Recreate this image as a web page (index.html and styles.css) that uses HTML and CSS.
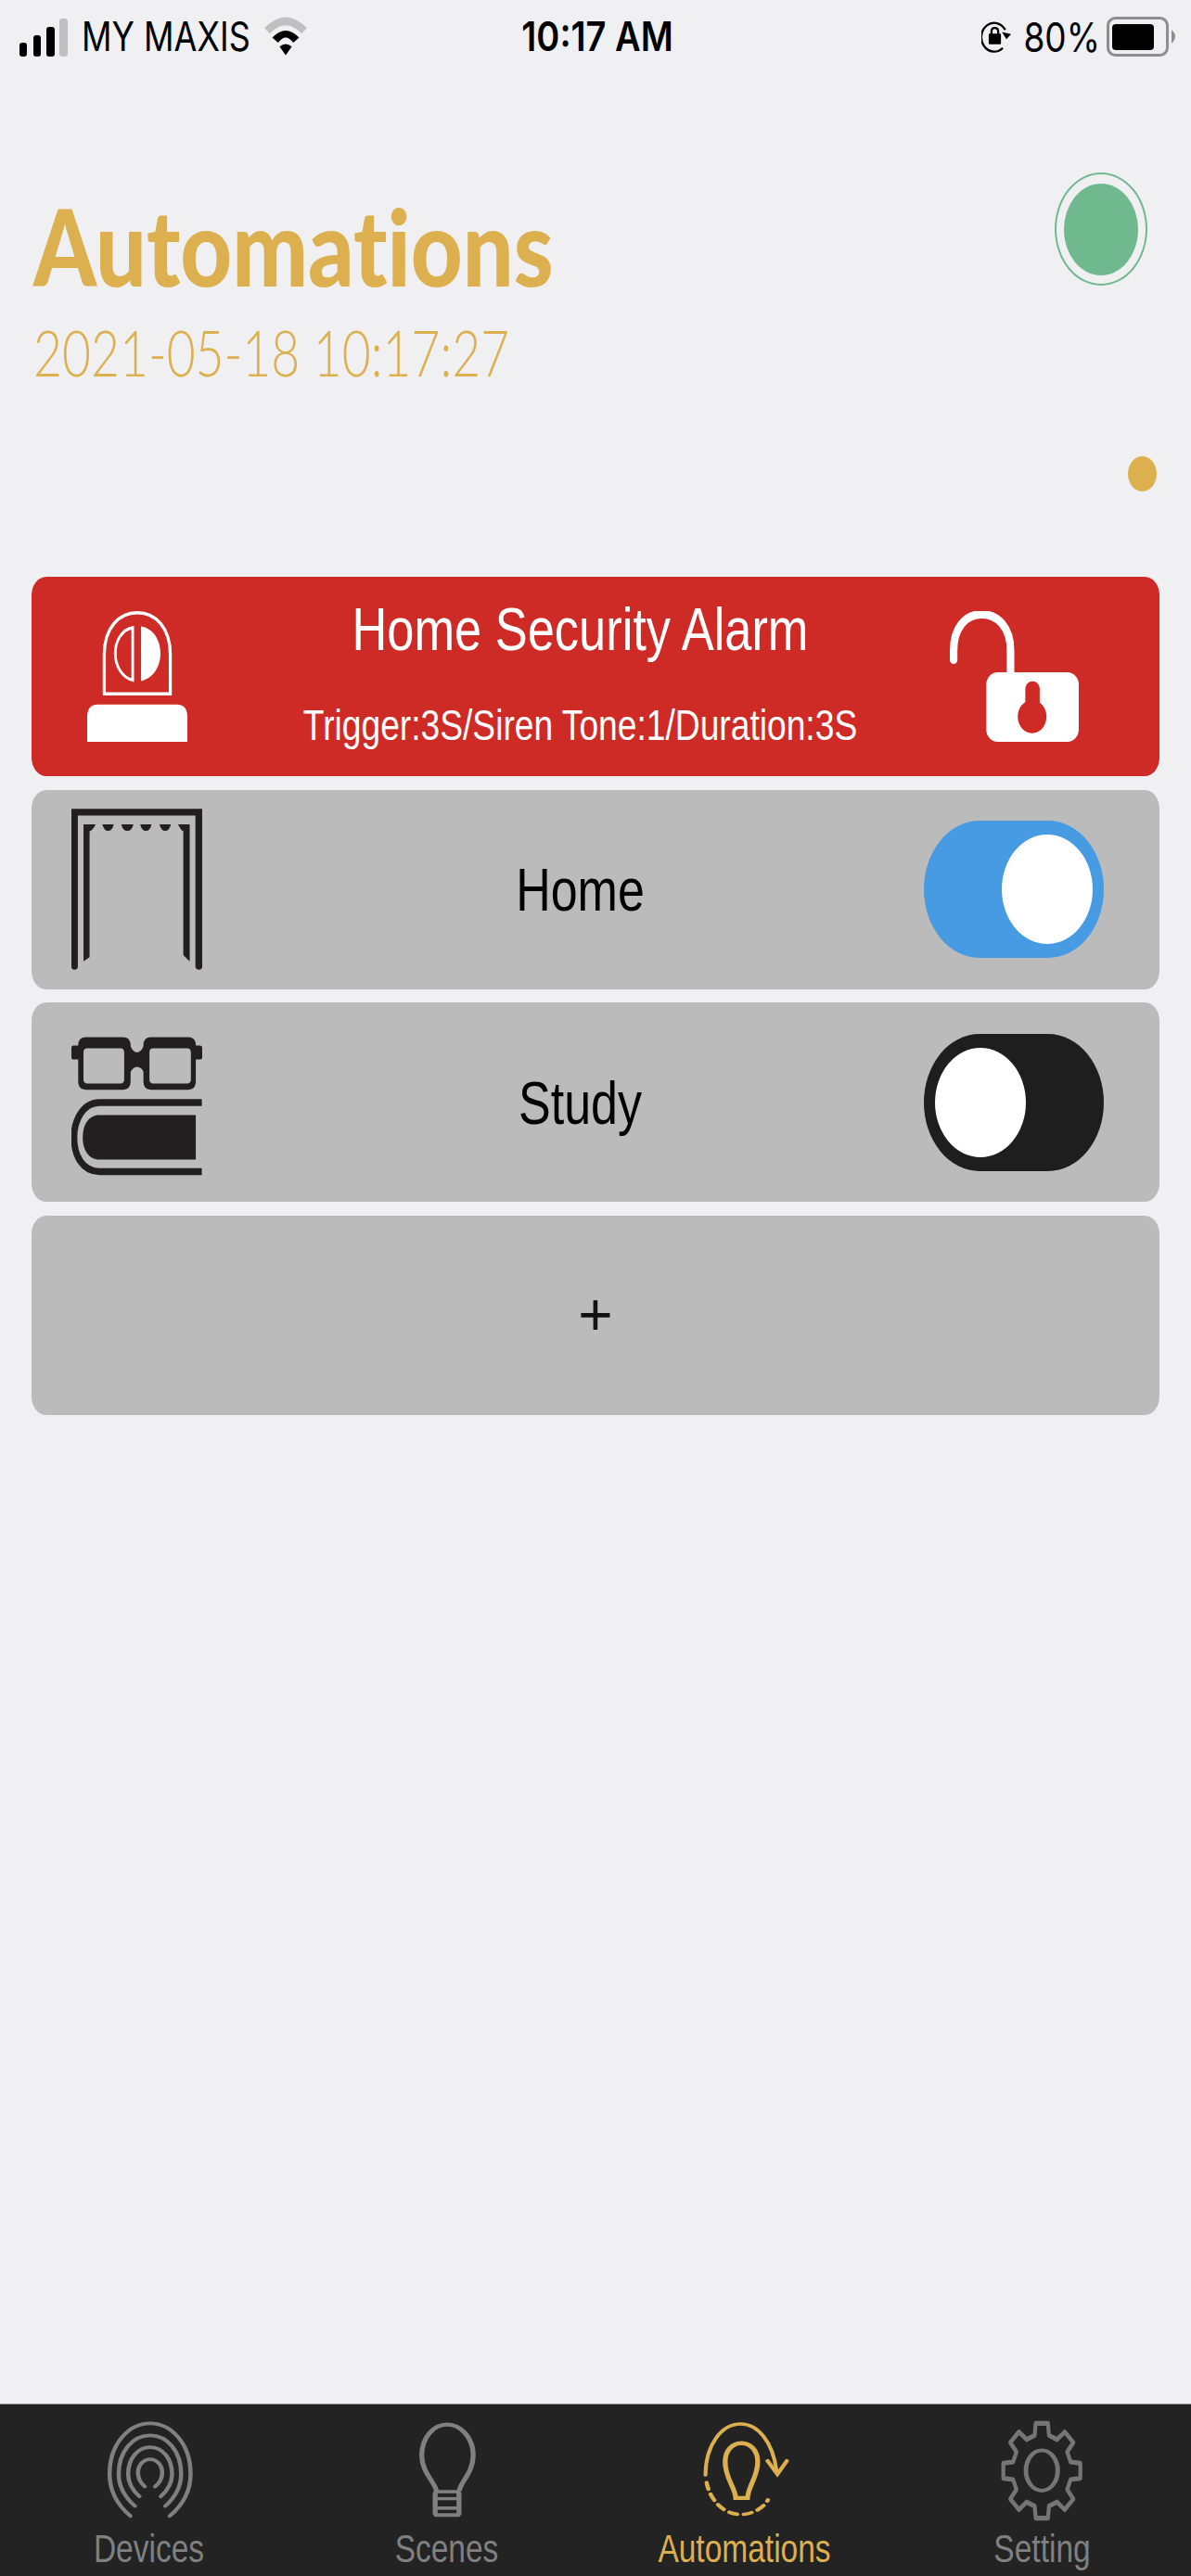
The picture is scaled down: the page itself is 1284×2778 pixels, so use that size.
FILE: index.html
```html
<!DOCTYPE html>
<html lang="en">
<head>
    <meta charset="UTF-8">
    <title>Automations</title>
    <link rel="stylesheet" href="styles.css">
</head>
<body>
    <div class="status">
        <div class="status-left">
            <svg class="bars" viewBox="0 0 52 41">
                <rect x="0" y="26" width="8" height="15" rx="3" fill="#000"/>
                <rect x="15" y="18" width="8" height="23" rx="3" fill="#000"/>
                <rect x="29" y="9" width="9" height="32" rx="3" fill="#000"/>
                <rect x="43" y="0" width="9" height="41" rx="3" fill="#c0c0c0"/>
            </svg>
            <span class="carrier">MY MAXIS</span>
            <svg class="wifi" viewBox="848 48 140 125">
                <path d="M848 84 Q918 12 988 84 L970 102 Q918 48 866 102 Z" fill="#c0c0c0"/>
                <path d="M874 115 Q918 69 962 115 L943 132 Q918 98 893 132 Z" fill="#000"/>
                <path d="M898 145 Q918 128 938 145 L918 173 Z" fill="#000"/>
            </svg>
        </div>
        <div class="clock">10:17 AM</div>
        <div class="status-right">
            <svg class="rotate-lock" viewBox="48 68 97 104">
                <path d="M118 157 A42 47 0 1 1 126 98" fill="none" stroke="#000" stroke-width="7"/>
                <path d="M115 105 L145 112 L130 128 Z" fill="#000"/>
                <rect x="72" y="110" width="40" height="35" rx="3" fill="#000"/>
                <path d="M81 112 V103 C81 88 103 88 103 103 V112" fill="none" stroke="#000" stroke-width="7"/>
            </svg>
            <span class="percent">80%</span>
            <svg class="battery" viewBox="0 0 74 43">
                <rect x="1.5" y="1.5" width="64" height="40" rx="8" fill="none" stroke="#8e8e8e" stroke-width="3"/>
                <rect x="6" y="8" width="45" height="28" rx="4" fill="#000"/>
                <path d="M70 14 Q74 18 74 21 Q74 25 70 29 Z" fill="#8e8e8e"/>
            </svg>
        </div>
    </div>

    <div class="head">
        <div>
            <h1 class="title"><span>Automations</span></h1>
            <div class="date"><span>2021-05-18 10:17:27</span></div>
        </div>
        <div class="online"></div>
    </div>
    <div class="dot-row"><div class="dot"></div></div>

    <div class="list">
        <div class="card card-alarm">
            <svg class="icon-siren" viewBox="181 110 264 316" preserveAspectRatio="none">
                <path d="M226 310 V215 C226 150 265 114 313 114 C361 114 400 150 400 215 V310 Z" fill="none" stroke="#fff" stroke-width="8"/>
                <path d="M301 150 C270 155 255 185 255 212 C255 245 275 272 301 277 Z" fill="none" stroke="#fff" stroke-width="7"/>
                <path d="M323 147 C355 152 374 180 374 212 C374 245 355 272 323 279 Z" fill="#fff"/>
                <path d="M181 426 V365 Q181 336 210 336 H416 Q445 336 445 365 V426 Z" fill="#fff"/>
            </svg>
            <div class="alarm-text">
                <div class="alarm-name"><span>Home Security Alarm</span></div>
                <div class="alarm-info"><span>Trigger:3S/Siren Tone:1/Duration:3S</span></div>
            </div>
            <svg class="icon-lock" viewBox="938 110 340 316" preserveAspectRatio="none">
                <path d="M948 228 V205 C948 150 980 118 1022 118 C1065 118 1098 150 1098 205 V262" fill="none" stroke="#fff" stroke-width="20" stroke-linecap="round"/>
                <rect x="1034" y="258" width="244" height="168" rx="30" fill="#fff"/>
                <rect x="1137" y="280" width="38" height="70" rx="18" fill="#cf2b26"/>
                <ellipse cx="1155" cy="365" rx="38" ry="40" fill="#cf2b26"/>
            </svg>
        </div>

        <div class="card">
            <svg class="icon-room" viewBox="140 585 346 393" preserveAspectRatio="none">
                <path d="M140 588 H486 V968 Q486 975 478 975 Q468 975 468 968 V604 H157 V968 Q157 975 148 975 Q140 975 140 968 Z" fill="#231f20"/>
                <path d="M172 625 H204 L200 632 Q195 640 188 642 V945 L172 955 Z" fill="#231f20"/>
                <path d="M453 625 H422 L426 632 Q430 640 436 642 V940 L453 955 Z" fill="#231f20"/>
                <path d="M222 625 H252 Q248 641 237 641 Q226 641 222 625 Z" fill="#231f20"/>
                <path d="M272 625 H304 Q300 641 288 641 Q276 641 272 625 Z" fill="#231f20"/>
                <path d="M322 625 H352 Q348 641 337 641 Q326 641 322 625 Z" fill="#231f20"/>
                <path d="M373 625 H403 Q399 641 388 641 Q377 641 373 625 Z" fill="#231f20"/>
            </svg>
            <div class="card-name"><span>Home</span></div>
            <div class="toggle toggle-on"><div class="knob"></div></div>
        </div>

        <div class="card">
            <svg class="icon-room icon-study" viewBox="140 1119 347 354" preserveAspectRatio="none">
                <path fill-rule="evenodd" d="M178 1138 H277 Q297 1138 297 1158 V1245 Q297 1265 277 1265 H178 Q158 1265 158 1245 V1158 Q158 1138 178 1138 Z M182 1165 Q172 1165 172 1175 V1240 Q172 1250 182 1250 H270 Q280 1250 280 1240 V1175 Q280 1165 270 1165 Z" fill="#231f20"/>
                <path fill-rule="evenodd" d="M351 1138 H450 Q470 1138 470 1158 V1245 Q470 1265 450 1265 H351 Q331 1265 331 1245 V1158 Q331 1138 351 1138 Z M357 1165 Q347 1165 347 1175 V1240 Q347 1250 357 1250 H447 Q457 1250 457 1240 V1175 Q457 1165 447 1165 Z" fill="#231f20"/>
                <path d="M290 1145 Q300 1175 314 1175 Q328 1175 338 1145 V1235 Q330 1210 314 1210 Q300 1210 290 1235 Z" fill="#231f20"/>
                <rect x="140" y="1158" width="24" height="34" rx="6" fill="#231f20"/>
                <rect x="464" y="1158" width="23" height="34" rx="6" fill="#231f20"/>
                <path d="M486 1296 H215 C170 1296 147 1340 147 1380 C147 1425 170 1463 215 1463 H486" fill="none" stroke="#231f20" stroke-width="17"/>
                <path d="M470 1326 H215 C185 1326 170 1350 170 1380 C170 1410 185 1434 215 1434 H470 Z" fill="#231f20"/>
            </svg>
            <div class="card-name"><span>Study</span></div>
            <div class="toggle toggle-off"><div class="knob"></div></div>
        </div>

        <div class="card card-add"><span>+</span></div>
    </div>

    <div class="tabs">
        <div class="tab">
            <svg class="tab-icon" viewBox="268 115 250 335" preserveAspectRatio="none">
                <g fill="none" stroke="#808080" stroke-width="11" stroke-linecap="round">
                    <path d="M343 430 C300 385 288 340 288 295 C288 195 340 131 395 131 C450 131 502 195 502 295 C502 340 490 385 447 430"/>
                    <path d="M355 398 C325 365 312 330 312 295 C312 220 350 170 395 170 C440 170 477 220 477 295 C477 330 465 365 435 398"/>
                    <path d="M367 367 C347 345 337 320 337 295 C337 245 362 208 395 208 C428 208 453 245 453 295 C453 320 443 345 423 367"/>
                    <path d="M381 335 C368 322 363 305 363 290 C363 265 378 247 395 247 C412 247 427 265 427 290 C427 305 422 322 408 335"/>
                </g>
            </svg>
            <span class="tab-label">Devices</span>
        </div>
        <div class="tab">
            <svg class="tab-icon" viewBox="1055 115 250 335" preserveAspectRatio="none">
                <path d="M1152 350 C1148 320 1113 290 1113 235 C1113 175 1145 135 1180 135 C1215 135 1249 175 1249 235 C1249 290 1215 320 1212 350" fill="none" stroke="#808080" stroke-width="13"/>
                <rect x="1142" y="346" width="76" height="87" rx="12" fill="#808080"/>
                <rect x="1155" y="357" width="50" height="12" fill="#232323"/>
                <rect x="1155" y="379" width="50" height="20" fill="#232323"/>
                <rect x="1155" y="410" width="50" height="11" fill="#232323"/>
            </svg>
            <span class="tab-label">Scenes</span>
        </div>
        <div class="tab tab-active">
            <svg class="tab-icon" viewBox="271 115 250 335" preserveAspectRatio="none">
                <g fill="none" stroke="#dcb04f" stroke-width="10" stroke-linecap="round">
                    <path d="M292 298 C292 200 335 133 385 133 C430 133 470 190 480 285"/>
                    <path d="M456 252 L482 295 L507 252" stroke-width="11"/>
                    <path d="M295 322 C302 370 335 425 385 425 C415 425 445 405 457 378" stroke-dasharray="22 17" stroke-width="11"/>
                    <path d="M372 372 C370 335 344 310 344 255 C344 220 362 195 387 195 C412 195 430 220 430 255 C430 305 406 330 403 372 Z" stroke-width="13"/>
                </g>
            </svg>
            <span class="tab-label">Automations</span>
        </div>
        <div class="tab">
            <svg class="tab-icon" viewBox="1052 115 250 335" preserveAspectRatio="none">
                <g fill="none" stroke="#757575">
                    <ellipse cx="1175" cy="283" rx="42" ry="65" stroke-width="12"/>
                    <path transform="translate(1175 284) scale(1.03 1.55)" stroke-width="10" stroke-linejoin="round" d="M-18.4 -73.7 L-15.6 -98.8 L15.6 -98.8 L18.4 -73.7 L39.1 -65.1 L58.8 -80.9 L80.9 -58.8 L65.1 -39.1 L73.7 -18.4 L98.8 -15.6 L98.8 15.6 L73.7 18.4 L65.1 39.1 L80.9 58.8 L58.8 80.9 L39.1 65.1 L18.4 73.7 L15.6 98.8 L-15.6 98.8 L-18.4 73.7 L-39.1 65.1 L-58.8 80.9 L-80.9 58.8 L-65.1 39.1 L-73.7 18.4 L-98.8 15.6 L-98.8 -15.6 L-73.7 -18.4 L-65.1 -39.1 L-80.9 -58.8 L-58.8 -80.9 L-39.1 -65.1 Z"/>
                </g>
            </svg>
            <span class="tab-label">Setting</span>
        </div>
    </div>
</body>
</html>
```

FILE: styles.css
```css
*{
    margin: 0;
    padding: 0;
    box-sizing: border-box;
}
html, body{
    height: 100%;
}
body{
    display: flex;
    flex-direction: column;
    background: #f0f0f2;
    font-family: "Liberation Sans", Arial, sans-serif;
    overflow: hidden;
}
span{
    display: inline-block;
}

/* status bar */
.status{
    height: 78px;
    padding: 0 17px 0 21px;
    display: grid;
    grid-template-columns: 1fr auto 1fr;
    align-items: center;
    font-family: Inter, sans-serif;
    color: #000;
}
.status-left, .status-right{
    display: flex;
    align-items: center;
}
.status-right{
    justify-content: flex-end;
}
.bars{
    width: 52px;
    height: 41px;
    margin-top: 2px;
}
.carrier{
    margin-left: 15px;
    font-size: 36px;
    transform: scaleY(1.22);
}
.wifi{
    width: 46px;
    height: 42px;
    margin-left: 15px;
}
.clock{
    font-size: 38px;
    font-weight: 600;
    transform: scaleY(1.16);
}
.rotate-lock{
    width: 32px;
    height: 35px;
}
.percent{
    margin-left: 13px;
    font-size: 37px;
    transform: scaleY(1.19);
}
.battery{
    width: 74px;
    height: 43px;
    margin-left: 7px;
}

/* header */
.head{
    display: flex;
    justify-content: space-between;
    padding: 108px 47px 0 36px;
}
.title{
    margin-top: 19px;
    font-family: Lato, sans-serif;
    font-size: 100px;
    line-height: 120px;
    font-weight: 900;
    color: #dcb04f;
    font-variant-ligatures: none;
}
.title span{
    transform-origin: left center;
    transform: scale(.97, 1.14);
}
.date{
    margin-top: 25px;
    font-family: Lato, sans-serif;
    font-size: 60px;
    line-height: 60px;
    font-weight: 300;
    color: #dcb04f;
    font-variant-numeric: lining-nums;
}
.date span{
    transform-origin: left center;
    transform: scale(.89, 1.14);
}
.online{
    width: 100px;
    height: 122px;
    padding: 9.5px 8px;
    border: 2px solid #70b98e;
    border-radius: 50%;
}
.online::after{
    content: "";
    display: block;
    height: 100%;
    background: #70b98e;
    border-radius: 50%;
}
.dot-row{
    display: flex;
    justify-content: flex-end;
    padding-right: 37px;
    margin-top: 82px;
}
.dot{
    width: 31px;
    height: 38px;
    background: #dcb04f;
    border-radius: 50%;
}

/* cards */
.list{
    display: flex;
    flex-direction: column;
    gap: 14.5px;
    margin: 92px 34px 0;
}
.card{
    height: 215px;
    padding: 0 60px 0 43px;
    display: grid;
    grid-template-columns: 141px 1fr 194px;
    align-items: center;
    justify-items: center;
    background: #bbbbbb;
    border-radius: 16px / 20px;
    color: #000;
}
.card-alarm{
    background: #cf2b26;
    color: #fff;
}
.icon-room{
    width: 141px;
    height: 176px;
}
.icon-study{
    height: 158px;
}
.icon-siren{
    width: 108px;
    height: 141px;
}
.icon-lock{
    width: 139px;
    height: 141px;
}
.alarm-text{
    padding-left: 37px;
    display: flex;
    flex-direction: column;
    gap: 44px;
    text-align: center;
    white-space: nowrap;
}
.alarm-name{
    font-size: 52.4px;
    line-height: 60px;
}
.alarm-info{
    font-size: 37.2px;
    line-height: 60px;
}
.alarm-name span, .alarm-info span, .card-name span{
    transform: scaleY(1.25);
}
.card-name{
    padding-left: 37px;
    font-size: 52px;
}
.card-add{
    display: flex;
    justify-content: center;
    padding: 0;
    font-size: 64px;
    color: #111;
}
.toggle{
    width: 194px;
    height: 148px;
    padding: 0 12px;
    display: flex;
    align-items: center;
    border-radius: 60px / 74px;
}
.toggle-on{
    justify-content: flex-end;
    background: #469be3;
}
.toggle-off{
    background: #1f1e1f;
}
.knob{
    width: 98px;
    height: 118px;
    background: #fff;
    border-radius: 50%;
}

/* tab bar */
.tabs{
    margin-top: auto;
    height: 186px;
    padding: 15px 0 0;
    display: grid;
    grid-template-columns: repeat(4, 1fr);
    background: #232323;
    border-top: 1px solid #9a9a9a;
}
.tab{
    display: flex;
    flex-direction: column;
    align-items: center;
    color: #808080;
}
.tab-active{
    color: #dcb04f;
}
.tab-icon{
    width: 102px;
    height: 112px;
}
.tab-label{
    margin-top: 7px;
    font-size: 33.5px;
    line-height: 44px;
    transform: scaleY(1.25);
}
```
